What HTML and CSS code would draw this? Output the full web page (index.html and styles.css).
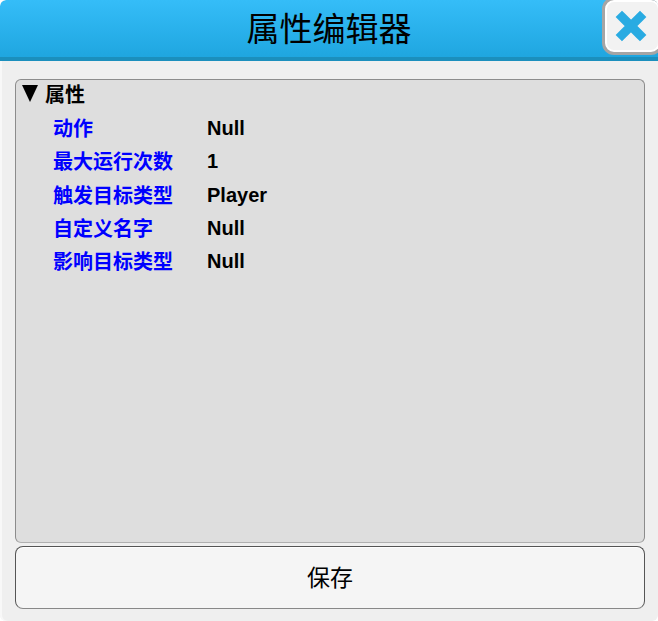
FILE: index.html
```html
<!DOCTYPE html>
<html lang="zh">
<head>
<meta charset="UTF-8" />
<title>属性编辑器</title>
<link rel="stylesheet" href="styles.css">
</head>
<body>
<div class="window">
  <header class="title-bar">
    <h1>属性编辑器</h1>
    <button class="close-btn" type="button" aria-label="关闭">
      <svg viewBox="0 0 32 32" width="32" height="32">
        <path d="M7 7 L25 25 M25 7 L7 25" stroke="#29abe2" stroke-width="9" stroke-linecap="square" fill="none" />
      </svg>
    </button>
  </header>
  <main class="content">
    <section class="panel">
      <div class="group-title"><span class="arrow"></span>属性</div>
      <div class="row"><span class="key">动作</span><span class="val">Null</span></div>
      <div class="row"><span class="key">最大运行次数</span><span class="val">1</span></div>
      <div class="row"><span class="key">触发目标类型</span><span class="val">Player</span></div>
      <div class="row"><span class="key">自定义名字</span><span class="val">Null</span></div>
      <div class="row"><span class="key">影响目标类型</span><span class="val">Null</span></div>
    </section>
    <button class="save-btn" type="button">保存</button>
  </main>
</div>
</body>
</html>
```

FILE: styles.css
```css
html, body {
  margin: 0;
  height: 100%;
  background: #fff;
}
body {
  font-family: "Liberation Sans", "Noto Sans CJK SC", sans-serif;
  color: #000;
}
.window {
  width: 658px;
  height: 621px;
  display: flex;
  flex-direction: column;
  background: #efefef;
  border-radius: 6px;
  box-shadow: inset 2px 0 #f8f8f8;
  overflow: hidden;
}
.title-bar {
  position: relative;
  height: 57px;
  flex: none;
  display: flex;
  align-items: center;
  justify-content: center;
  background: linear-gradient(#35bdf8, #1fa6e0);
  border-bottom: 4px solid #1b8fbd;
  border-radius: 6px 6px 0 0;
}
.title-bar h1 {
  margin: 2px 0 0;
  font-size: 33px;
  font-weight: 400;
  line-height: 1;
}
.close-btn {
  position: absolute;
  top: -3px;
  right: -5px;
  width: 61px;
  height: 58px;
  padding: 0 3px 0 0;
  display: flex;
  align-items: center;
  justify-content: center;
  background: #f2f2f2;
  border: 3px solid #a5a5a5;
  border-radius: 12px;
  box-shadow: inset 0 0 0 2px #fff;
}
.content {
  flex: 1;
  display: flex;
  flex-direction: column;
  padding: 18px 13px 12px 15px;
}
.panel {
  height: 464px;
  flex: none;
  box-sizing: border-box;
  padding: 0 6px;
  background: #dedede;
  border: 1px solid #8c8c8c;
  border-bottom-color: #b0b0b0;
  border-radius: 6px;
}
.group-title {
  display: flex;
  align-items: center;
  box-sizing: border-box;
  height: 31px;
  padding-bottom: 5px;
  font-size: 20px;
  font-weight: 700;
}
.arrow {
  width: 0;
  height: 0;
  margin: 1px 7px 0 0;
  border-left: 8.5px solid transparent;
  border-right: 8.5px solid transparent;
  border-top: 17px solid #000;
}
.row {
  display: flex;
  align-items: center;
  height: 33.3px;
  padding-left: 31px;
  font-size: 20px;
  font-weight: 700;
}
.key {
  width: 154px;
  color: #0000ff;
}
.val {
  margin-top: 2px;
}
.save-btn {
  box-sizing: border-box;
  height: 63px;
  margin-top: 3px;
  padding: 0 0 4px;
  flex: none;
  font-family: inherit;
  font-size: 23px;
  color: #000;
  background: #f5f5f5;
  border: 1px solid #555;
  border-bottom-color: #888;
  border-radius: 8px;
  box-shadow: inset 0 1px #fff;
}
```
